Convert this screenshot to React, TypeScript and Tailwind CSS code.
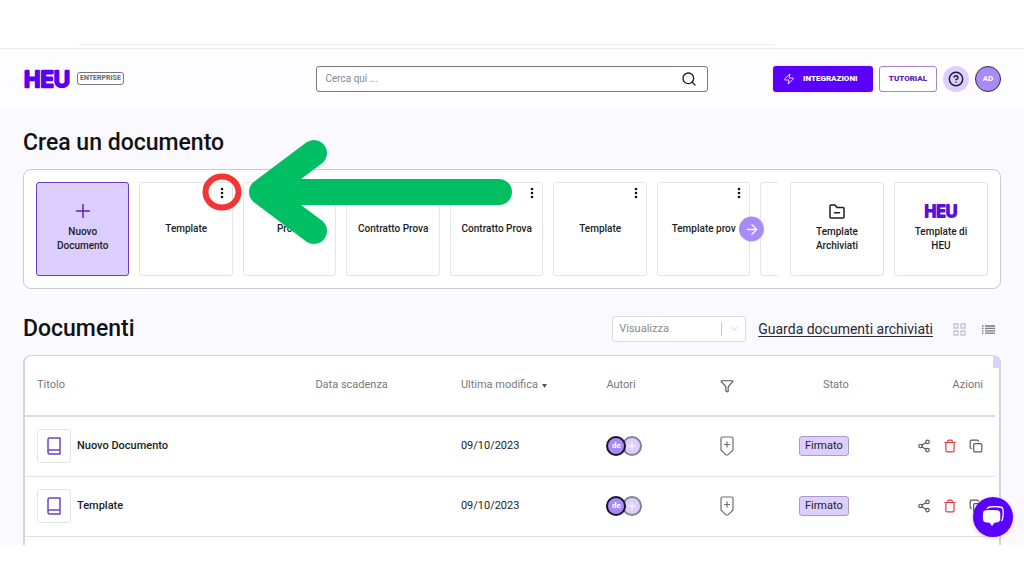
import {
  ArrowRight,
  ChevronDown,
  CircleHelp,
  Copy,
  Filter,
  Plus,
  Search,
  Share2,
  Trash,
  Zap,
} from "lucide-react";

const templates = [
  "Template",
  "Prova",
  "Contratto Prova",
  "Contratto Prova",
  "Template",
  "Template prov",
  "",
];

const documents = [
  { title: "Nuovo Documento", date: "09/10/2023" },
  { title: "Template", date: "09/10/2023" },
];

function Logo({ className }: { className: string }) {
  return (
    <svg viewBox="0 0 56 28" className={className} aria-label="HEU">
      <text
        x="28"
        y="22"
        textAnchor="middle"
        fontFamily="Inter, sans-serif"
        fontWeight="500"
        fontSize="22"
        fill="currentColor"
        stroke="currentColor"
        strokeWidth="2.6"
        strokeLinejoin="round"
      >
        HEU
      </text>
    </svg>
  );
}

function Dots() {
  return (
    <svg viewBox="0 0 4 12" className="h-3 w-1" fill="#111">
      <circle cx="2" cy="2" r="1.3" />
      <circle cx="2" cy="6" r="1.3" />
      <circle cx="2" cy="10" r="1.3" />
    </svg>
  );
}

function FolderIcon() {
  return (
    <svg viewBox="0 0 16 15" className="h-[15px] w-4" fill="none" stroke="#1c1c22" strokeWidth="1.5" strokeLinejoin="round">
      <path d="M1 2a1 1 0 0 1 1-1h4l2 2.5h6a1 1 0 0 1 1 1V13a1 1 0 0 1-1 1H2a1 1 0 0 1-1-1z" />
      <path d="M5.5 8.8h5" strokeLinecap="round" />
    </svg>
  );
}

function BookIcon() {
  return (
    <svg viewBox="0 0 14 18" className="h-[18px] w-3.5" fill="none" stroke="#6b46c1" strokeWidth="1.5" strokeLinejoin="round">
      <path d="M1 15.5v-13A1.5 1.5 0 0 1 2.5 1H13v16H2.5A1.5 1.5 0 0 1 1 15.5zM1 14.5a1.5 1.5 0 0 1 1.5-1.5H13" />
    </svg>
  );
}

function TagIcon() {
  return (
    <svg viewBox="0 0 14 20" className="mx-auto h-5 w-3.5" fill="none" stroke="#6f6f76" strokeWidth="1.2" strokeLinejoin="round">
      <path d="M2.5 1h9A1.5 1.5 0 0 1 13 2.5V14l-4.7 4.6a1.8 1.8 0 0 1-2.6 0L1 14V2.5A1.5 1.5 0 0 1 2.5 1z" />
      <path d="M7 5.5v6M4 8.5h6" />
    </svg>
  );
}

function Header() {
  return (
    <header className="flex h-[60px] items-center border-t border-[#ececef] bg-[#fdfcff] px-[23px]">
      <div className="flex flex-1 items-center gap-0.5">
        <Logo className="-ml-1 h-7 w-14 text-[#5a00f0]" />
        <span className="rounded-[3px] border border-[#77777c] px-0.5 text-[7px] leading-[11px] font-bold text-[#68686e]">
          ENTERPRISE
        </span>
      </div>
      <form className="flex h-[26px] w-[40%] items-center rounded-[3px] border border-[#77777c] bg-white pr-2.5 pl-2">
        <input
          type="text"
          aria-label="Cerca"
          placeholder="Cerca qui ..."
          className="min-w-0 flex-1 text-[10px] outline-none placeholder:text-[#88888d]"
        />
        <button type="button" aria-label="Cerca">
          <Search className="h-4 w-4 text-[#1c1c22]" strokeWidth={2} />
        </button>
      </form>
      <div className="flex flex-1 items-center justify-end gap-1.5">
        <button className="flex h-[26px] w-[100px] items-center gap-2 rounded-[3px] bg-[#5a00ff] pl-2.5 text-[8px] font-black text-white shadow-[0_0_3px_#ffc9a8]">
          <Zap className="h-3 w-3" strokeWidth={1.8} />
          INTEGRAZIONI
        </button>
        <button className="h-[26px] w-[58px] rounded-[3px] border border-[#a585d0] bg-white text-[8px] font-black text-[#5b21b6]">
          TUTORIAL
        </button>
        <button aria-label="Aiuto" className="flex h-[26px] w-[26px] items-center justify-center rounded-full bg-[#dccfff]">
          <CircleHelp className="h-4 w-4 text-[#1c1c2a]" strokeWidth={2.2} />
        </button>
        <button className="h-[26px] w-[26px] rounded-full border border-[#33283f] bg-[#a98bf5] text-[8px] font-bold text-white">
          AD
        </button>
      </div>
    </header>
  );
}

function TemplatePanel() {
  return (
    <div className="relative mt-3 flex gap-3 rounded-lg border border-[#c9c9cf] bg-white p-3">
      <div className="relative min-w-0 flex-1">
        <div className="grid auto-cols-[12.6%] grid-flow-col gap-2.5 overflow-hidden">
          <button className="flex h-[94px] flex-col items-center rounded-[3px] border border-[#6b3fc0] bg-[#dccfff] pt-5 text-[10px] leading-3.5 font-medium text-[#1c1c22]">
            <span className="mb-1.5 flex h-4 items-center">
              <Plus className="h-[22px] w-[22px] text-[#5b21b6]" strokeWidth={1.6} />
            </span>
            Nuovo
            <br />
            Documento
          </button>
          {templates.map((name, i) => (
            <div
              key={i}
              className="relative flex h-[94px] items-center justify-center rounded-[3px] border border-[#e4e4e8] text-[10px] leading-3.5 font-medium whitespace-nowrap text-[#1c1c22]"
            >
              {name}
              {name && (
                <button aria-label="Opzioni" className="absolute top-1 right-2">
                  <Dots />
                </button>
              )}
            </div>
          ))}
        </div>
        <button
          aria-label="Avanti"
          className="absolute top-1/2 right-3.5 flex h-[25px] w-[25px] -translate-y-1/2 items-center justify-center rounded-full bg-[#a98bf8] text-white"
        >
          <ArrowRight className="h-4 w-4" strokeWidth={2} />
        </button>
      </div>
      <div className="flex gap-2.5">
        <button className="flex h-[94px] w-[94px] flex-col items-center rounded-[3px] border border-[#e4e4e8] pt-5 text-[10px] leading-3.5 font-medium text-[#1c1c22]">
          <span className="mb-1.5 flex h-4 items-center">
            <FolderIcon />
          </span>
          Template
          <br />
          Archiviati
        </button>
        <button className="flex h-[94px] w-[94px] flex-col items-center rounded-[3px] border border-[#e4e4e8] pt-5 text-[10px] leading-3.5 font-medium text-[#1c1c22]">
          <span className="mb-1.5 flex h-4 items-center">
            <Logo className="h-5 w-10 text-[#5a10d8]" />
          </span>
          Template di
          <br />
          HEU
        </button>
      </div>

      <svg
        viewBox="0 0 500 130"
        className="pointer-events-none absolute -top-10 left-0 h-[130px] w-[500px]"
        fill="none"
        strokeLinecap="round"
        strokeLinejoin="round"
      >
        <ellipse cx="198" cy="62" rx="16.5" ry="15.5" stroke="#f73434" strokeWidth="6" />
        <path d="M475 62H238M290 23L238 62L290 101" stroke="#00bf63" strokeWidth="26" />
      </svg>
    </div>
  );
}

function DocumentTable() {
  return (
    <div className="relative mt-3 rounded-t-lg border-x-2 border-t border-[#d4d4da] bg-white pr-1">
      <div className="absolute top-0 right-0 h-3 w-1.5 rounded-tr-md bg-[#dccfff]" />
      <table className="w-full table-fixed text-[11px] text-[#1c1c22]">
        <colgroup>
          <col className="w-[28.7%]" />
          <col className="w-[15%]" />
          <col className="w-[15%]" />
          <col className="w-[9.8%]" />
          <col className="w-[7.8%]" />
          <col className="w-[14.3%]" />
          <col />
        </colgroup>
        <thead>
          <tr className="h-[60px] border-b-2 border-[#dcdce0] text-left text-[#77777c]">
            <th className="pl-3 font-normal">Titolo</th>
            <th className="pl-3 font-normal">Data scadenza</th>
            <th className="pl-3 font-normal">
              <div className="flex items-center gap-1">
                Ultima modifica
                <svg viewBox="0 0 5 4" className="h-1 w-[5px]" fill="#55555c">
                  <path d="M0 0h5L2.5 4z" />
                </svg>
              </div>
            </th>
            <th className="pl-3 font-normal">Autori</th>
            <th className="font-normal">
              <button aria-label="Filtra" className="mx-auto block">
                <Filter className="h-3.5 w-3.5 text-[#55555c]" strokeWidth={2} />
              </button>
            </th>
            <th className="pr-[55px] text-right font-normal">Stato</th>
            <th className="pr-3 text-right font-normal">Azioni</th>
          </tr>
        </thead>
        <tbody>
          {documents.map((doc) => (
            <tr key={doc.title} className="h-[60px] border-b border-[#e2e2e6]">
              <td className="pl-3">
                <div className="flex items-center gap-1.5 font-medium">
                  <span className="flex h-[34px] w-[34px] items-center justify-center rounded-[3px] border border-[#e4e4e8]">
                    <BookIcon />
                  </span>
                  {doc.title}
                </div>
              </td>
              <td />
              <td className="pl-3">{doc.date}</td>
              <td className="pl-3">
                <div className="flex">
                  <span className="z-10 flex h-5 w-5 items-center justify-center rounded-full border-2 border-[#18122b] bg-[#a98bf5] text-[8px] font-bold text-white">
                    de
                  </span>
                  <span className="-ml-1 flex h-5 w-5 items-center justify-center rounded-full border-2 border-[#85808f] bg-[#dccfff] text-white">
                    <Plus className="h-3 w-3" />
                  </span>
                </div>
              </td>
              <td>
                <TagIcon />
              </td>
              <td className="pr-[55px] text-right">
                <span className="inline-block rounded-[3px] border border-[#a99ac8] bg-[#dccfff] px-[5px] leading-[18px]">
                  Firmato
                </span>
              </td>
              <td className="pr-3">
                <div className="flex justify-end gap-3 text-[#55555c]">
                  <button aria-label="Condividi">
                    <Share2 className="h-3.5 w-3.5" />
                  </button>
                  <button aria-label="Elimina" className="text-[#e0393e]">
                    <Trash className="h-3.5 w-3.5" />
                  </button>
                  <button aria-label="Duplica">
                    <Copy className="h-3.5 w-3.5" />
                  </button>
                </div>
              </td>
            </tr>
          ))}
        </tbody>
      </table>
      <div className="h-2" />
    </div>
  );
}

export default function App() {
  return (
    <div className="min-h-screen bg-white font-[Roboto,sans-serif] text-[#111]">
      <div className="flex h-12 items-end">
        <div className="mb-[3px] ml-[7.6%] h-px w-[68%] bg-[#efeff1]" />
      </div>
      <div className="relative bg-[#faf9ff]">
        <Header />
        <main className="px-[23px] pt-[21px]">
          <h1 className="text-[23px] leading-7 font-medium">Crea un documento</h1>
          <TemplatePanel />

          <div className="mt-[26px] flex items-center">
            <h2 className="flex-1 text-[23px] leading-7 font-medium">Documenti</h2>
            <div className="relative">
              <select
                aria-label="Visualizza"
                className="block h-[26px] w-[134px] appearance-none rounded-[3px] border border-[#dcdce0] bg-white pl-1.5 text-[11px] text-[#88888d]"
              >
                <option>Visualizza</option>
              </select>
              <span className="pointer-events-none absolute inset-y-1.5 right-1.5 flex items-center gap-1.5 border-l border-[#cccccf] pl-1.5 text-[#c4c4c8]">
                <ChevronDown className="h-3 w-3" />
              </span>
            </div>
            <a href="#archiviati" className="ml-3 text-sm text-[#2a2a30] underline underline-offset-2">
              Guarda documenti archiviati
            </a>
            <button aria-label="Griglia" className="ml-5">
              <svg viewBox="0 0 13 13" className="h-[13px] w-[13px]" fill="none" stroke="#c4c4c8" strokeWidth="1.3">
                <path d="M1 1h4v4H1zM8 1h4v4H8zM1 8h4v4H1zM8 8h4v4H8z" />
              </svg>
            </button>
            <button aria-label="Elenco" className="mr-1.5 ml-4">
              <svg viewBox="0 0 13 9" className="h-[9px] w-[13px]" stroke="#77777c" strokeWidth="1.3">
                <path d="M0 1h1.5M3 1h10M0 3.4h1.5M3 3.4h10M0 5.8h1.5M3 5.8h10M0 8.2h1.5M3 8.2h10" />
              </svg>
            </button>
          </div>
          <DocumentTable />
        </main>

        <button
          aria-label="Chat"
          className="absolute right-[11px] bottom-2 z-20 flex h-10 w-10 items-center justify-center rounded-full bg-[#5a00ff] shadow-[0_1px_5px_#0003]"
        >
          <svg viewBox="0 0 22 21" className="h-[21px] w-[22px]">
            <path
              d="M5 3Q6 1 8 1Q13 .3 18 1Q21 1.2 21 4Q21.5 9 20.5 13Q20 14.5 19 14.8"
              fill="none"
              stroke="#fff"
              strokeWidth="1.3"
            />
            <path
              d="M3.5 4.3Q9.5 3.5 15.5 4.3Q18 4.5 18.2 7Q18.5 10.5 18.2 13.5Q18 16 15.5 16.3L12.5 16.7L10 20L7.5 16.7L3.5 16.3Q1.2 16 1 13.5Q.6 10.5 1 7Q1.2 4.5 3.5 4.3Z"
              fill="#fff"
            />
          </svg>
        </button>
      </div>
    </div>
  );
}
